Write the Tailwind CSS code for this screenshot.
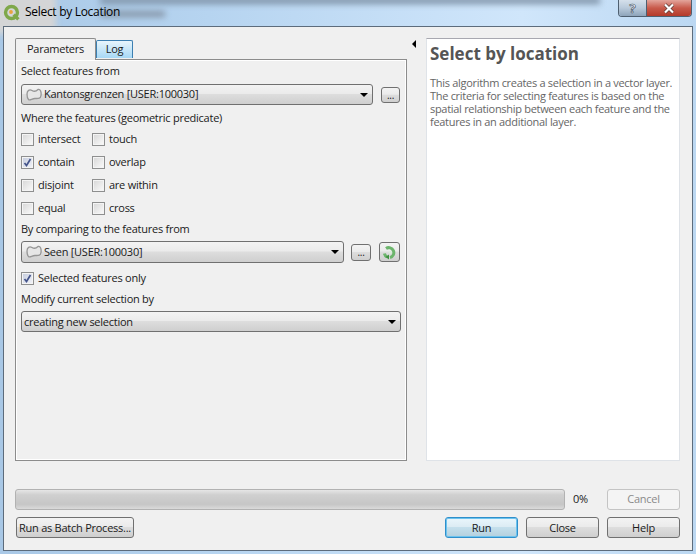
<!DOCTYPE html>
<html lang="en">
<head>
<meta charset="utf-8">
<title>Select by Location</title>
<script src="https://cdn.jsdelivr.net/npm/@tailwindcss/browser@4"></script>
</head>
<body class="m-0 overflow-hidden">
<div class="relative w-[696px] h-[554px] overflow-hidden flex flex-col bg-[linear-gradient(90deg,#a9c8e6,#b6d4f0_30%,#d0e6fb_75%,#bcd8f2)] font-['Open_Sans','Liberation_Sans',sans-serif] text-[11px] tracking-[-0.25px] text-[#1a1a1a]">
  <!-- blurred desktop behind the glass title bar -->
  <div class="absolute left-[-10px] top-[-6px] w-[66px] h-[40px] bg-[#d4d5d6] blur-[3px]"></div>
  <div class="absolute left-[100px] top-[-3px] w-[500px] h-[7px] bg-[#7f93a8] blur-[3px]"></div>
  <div class="absolute left-[100px] top-[11px] w-[65px] h-[6px] bg-[#8494a6] blur-[3px]"></div>

  <div class="relative h-[26px] shrink-0 flex items-start">
    <svg class="ml-[3px] mt-[4px]" width="17" height="17" viewBox="0 0 16 16"><circle cx="8" cy="8" r="5.6" fill="none" stroke="#7fa84a" stroke-width="3.2"/><path d="M10 10l4.5 4.5" stroke="#7fa84a" stroke-width="3.2"/><circle cx="7.5" cy="7.5" r="1.8" fill="#e8a33d"/></svg>
    <span class="ml-[5px] mt-[4px] text-[12px] leading-[16px] tracking-[-0.3px] text-black">Select by Location</span>
    <div class="ml-auto mr-[4px] flex h-[17px] w-[74px] rounded-b-[4px] border border-t-0 border-[#4e5f70] overflow-hidden">
      <div class="w-[28px] border-r border-[#4e5f70] bg-[linear-gradient(#d5e0eb,#b8c9da_50%,#8ea4ba)] flex items-center justify-center text-[13px] font-bold leading-none text-[#eef2f6] [-webkit-text-stroke:0.6px_#3a4856]">?</div>
      <div class="flex-1 bg-[linear-gradient(#e3a59c,#c85a4b_50%,#b43a2a)] flex items-center justify-center">
        <svg width="14" height="11" viewBox="0 0 14 11"><path d="M3 1.5l8 8M11 1.5l-8 8" stroke="#5a3a36" stroke-width="3.6"/><path d="M3 1.5l8 8M11 1.5l-8 8" stroke="#fff" stroke-width="2.2"/></svg>
      </div>
    </div>
  </div>

  <div class="relative mx-[3px] w-[690px] h-[525px] border border-[#5d6c7c] bg-[#f0f0f0] pl-[11px] pt-[11px] flex flex-col">
    <div class="flex h-[423px]">
      <!-- left: tabs -->
      <div class="w-[392px] flex flex-col">
        <div class="flex items-end h-[21px] relative z-10">
          <div class="w-[81px] h-[22px] -mb-px border border-b-0 border-[#8c8c8c] bg-[#f0f0f0] rounded-t-[2px] flex items-center justify-center">Parameters</div>
          <div class="w-[37px] h-[18px] mb-px border border-b-0 border-[#3c7fb1] bg-[linear-gradient(#e8f5fc,#a7d8f5)] rounded-t-[2px] flex items-center justify-center">Log</div>
        </div>
        <div class="flex-1 border border-[#8c8c8c] shadow-[inset_0_0_0_1px_#fff] pl-[5px] pr-[5px] pt-[3px] flex flex-col">
          <div class="h-[16px] leading-[16px]">Select features from</div>
          <div class="mt-[5px] flex items-center">
            <div class="w-[352px] h-[21px] border border-[#707070] rounded-[3px] bg-[linear-gradient(#f3f3f3,#ebebeb_45%,#dddddd_50%,#cfcfcf)] flex items-center pl-[4px]">
              <svg width="16" height="14" viewBox="0 0 16 14"><path d="M1 6C1 2.5 3.5 1 6 2.5S10 3.5 12 1.5C14.5 1 15.5 4 15 7.5S12 10.5 9 10.5 4 13 2.5 11.5 1 8 1 6Z" fill="#e6e6e6" stroke="#969696" stroke-width="1.3"/></svg>
              <span class="ml-[2px]">Kantonsgrenzen [USER:100030]</span>
              <svg class="ml-auto mr-[4px]" width="8" height="4" viewBox="0 0 8 4"><path d="M0 0h8L4 4Z" fill="#000"/></svg>
            </div>
            <div class="ml-[8px] w-[19px] h-[16px] border border-[#707070] rounded-[3px] bg-[linear-gradient(#f3f3f3,#ebebeb_45%,#dddddd_50%,#cfcfcf)] flex items-center justify-center text-[10px] leading-none">...</div>
          </div>
          <div class="mt-[5px] h-[16px] leading-[16px]">Where the features (geometric predicate)</div>
          <div class="mt-[2px] grid grid-cols-[71px_1fr] auto-rows-[23px] items-center">
            <label class="flex items-center gap-[4px]"><span class="w-[13px] h-[13px] border border-[#8e8f8f] bg-[linear-gradient(135deg,#d6d6d6,#fbfbfb)] shadow-[inset_0_0_0_1px_#f4f4f4]"></span>intersect</label>
            <label class="flex items-center gap-[4px]"><span class="w-[13px] h-[13px] border border-[#8e8f8f] bg-[linear-gradient(135deg,#d6d6d6,#fbfbfb)] shadow-[inset_0_0_0_1px_#f4f4f4]"></span>touch</label>
            <label class="flex items-center gap-[4px]"><span class="w-[13px] h-[13px] border border-[#8e8f8f] bg-[linear-gradient(135deg,#c4cbdd,#f4f5f9)] shadow-[inset_0_0_0_1px_#f4f4f4] flex items-center justify-center"><svg width="9" height="9" viewBox="0 0 9 9"><path d="M1.5 5l2 2.5L7.5 1" fill="none" stroke="#44548a" stroke-width="1.7"/></svg></span>contain</label>
            <label class="flex items-center gap-[4px]"><span class="w-[13px] h-[13px] border border-[#8e8f8f] bg-[linear-gradient(135deg,#d6d6d6,#fbfbfb)] shadow-[inset_0_0_0_1px_#f4f4f4]"></span>overlap</label>
            <label class="flex items-center gap-[4px]"><span class="w-[13px] h-[13px] border border-[#8e8f8f] bg-[linear-gradient(135deg,#d6d6d6,#fbfbfb)] shadow-[inset_0_0_0_1px_#f4f4f4]"></span>disjoint</label>
            <label class="flex items-center gap-[4px]"><span class="w-[13px] h-[13px] border border-[#8e8f8f] bg-[linear-gradient(135deg,#d6d6d6,#fbfbfb)] shadow-[inset_0_0_0_1px_#f4f4f4]"></span>are within</label>
            <label class="flex items-center gap-[4px]"><span class="w-[13px] h-[13px] border border-[#8e8f8f] bg-[linear-gradient(135deg,#d6d6d6,#fbfbfb)] shadow-[inset_0_0_0_1px_#f4f4f4]"></span>equal</label>
            <label class="flex items-center gap-[4px]"><span class="w-[13px] h-[13px] border border-[#8e8f8f] bg-[linear-gradient(135deg,#d6d6d6,#fbfbfb)] shadow-[inset_0_0_0_1px_#f4f4f4]"></span>cross</label>
          </div>
          <div class="mt-px h-[16px] leading-[16px]">By comparing to the features from</div>
          <div class="mt-[4px] flex items-center">
            <div class="w-[323px] h-[22px] border border-[#707070] rounded-[3px] bg-[linear-gradient(#f3f3f3,#ebebeb_45%,#dddddd_50%,#cfcfcf)] flex items-center pl-[4px]">
              <svg width="16" height="14" viewBox="0 0 16 14"><path d="M1 6C1 2.5 3.5 1 6 2.5S10 3.5 12 1.5C14.5 1 15.5 4 15 7.5S12 10.5 9 10.5 4 13 2.5 11.5 1 8 1 6Z" fill="#e6e6e6" stroke="#969696" stroke-width="1.3"/></svg>
              <span class="ml-[2px]">Seen [USER:100030]</span>
              <svg class="ml-auto mr-[4px]" width="8" height="4" viewBox="0 0 8 4"><path d="M0 0h8L4 4Z" fill="#000"/></svg>
            </div>
            <div class="ml-[7px] w-[20px] h-[17px] border border-[#707070] rounded-[3px] bg-[linear-gradient(#f3f3f3,#ebebeb_45%,#dddddd_50%,#cfcfcf)] flex items-center justify-center text-[10px] leading-none">...</div>
            <div class="ml-[8px] w-[21px] h-[20px] border border-[#707070] rounded-[3px] bg-[linear-gradient(#f3f3f3,#ebebeb_45%,#dddddd_50%,#cfcfcf)] flex items-center justify-center">
              <svg width="14" height="15" viewBox="0 0 14 15"><path d="M3 3.5A5 5 0 1 1 7 12.5" fill="none" stroke="#6cb56c" stroke-width="3"/><path d="M1.5 8.5A5 5 0 0 0 4 12" fill="none" stroke="#6cb56c" stroke-width="3"/><path d="M6 9.5v5l-3.5-2.5Z" fill="#3f9140"/><circle cx="7.5" cy="7.5" r="1.3" fill="#d9efd9"/></svg>
            </div>
          </div>
          <label class="mt-[7px] h-[16px] leading-[16px] flex items-center gap-[4px]"><span class="w-[13px] h-[13px] border border-[#8e8f8f] bg-[linear-gradient(135deg,#c4cbdd,#f4f5f9)] shadow-[inset_0_0_0_1px_#f4f4f4] flex items-center justify-center"><svg width="9" height="9" viewBox="0 0 9 9"><path d="M1.5 5l2 2.5L7.5 1" fill="none" stroke="#44548a" stroke-width="1.7"/></svg></span>Selected features only</label>
          <div class="mt-[5px] h-[16px] leading-[16px]">Modify current selection by</div>
          <div class="mt-[4px] w-[380px] h-[21px] border border-[#707070] rounded-[3px] bg-[linear-gradient(#f3f3f3,#ebebeb_45%,#dddddd_50%,#cfcfcf)] flex items-center pl-[2px] pt-px">
            <span>creating new selection</span>
            <svg class="ml-auto mr-[4px]" width="8" height="4" viewBox="0 0 8 4"><path d="M0 0h8L4 4Z" fill="#000"/></svg>
          </div>
        </div>
      </div>
      <!-- splitter -->
      <div class="w-[19px] pt-[2px] pl-[5px]">
        <svg width="4" height="8" viewBox="0 0 4 8"><path d="M4 0v8L0 4Z" fill="#000"/></svg>
      </div>
      <!-- help text -->
      <div class="w-[254px] bg-white border border-[#dfe3e8] border-t-[#a8a8b0] px-[3px] pt-[4px] text-[#666]">
        <h1 class="text-[17px] leading-[22px] font-bold tracking-normal text-[#555]">Select by location</h1>
        <p class="mt-[11px] text-[11px] leading-[13px] tracking-[-0.3px]">This algorithm creates a selection in a vector layer. The criteria for selecting features is based on the spatial relationship between each feature and the features in an additional layer.</p>
      </div>
    </div>

    <div class="mt-[27px] flex items-center h-[22px]">
      <div class="w-[550px] h-[21px] border border-[#b2b2b2] rounded-[3px] bg-[linear-gradient(#e6e6e6,#d0d0d0_25%,#c6c6c6_75%,#dadada)]"></div>
      <span class="ml-[8px]">0%</span>
      <div class="ml-auto w-[73px] h-[21px] border border-[#c4c4c4] rounded-[3px] bg-[#f4f4f4] flex items-center justify-center text-[#8a8a8a]">Cancel</div>
      <div class="w-[12px]"></div>
    </div>
    <div class="mt-[7px] flex items-center h-[21px] pl-px pr-[12px]">
      <div class="w-[118px] h-[21px] pt-px border border-[#707070] rounded-[3px] bg-[linear-gradient(#f3f3f3,#ebebeb_45%,#dddddd_50%,#cfcfcf)] flex items-center justify-center whitespace-nowrap">Run as Batch Process...</div>
      <div class="ml-auto w-[73px] h-[21px] pt-px border border-[#2f8fcb] rounded-[3px] shadow-[inset_0_0_0_1px_#6cc3ee] bg-[linear-gradient(#eaf6fc,#dcecf4_45%,#c4dfec_50%,#b4d0de)] flex items-center justify-center">Run</div>
      <div class="ml-[8px] w-[73px] h-[21px] pt-px border border-[#707070] rounded-[3px] bg-[linear-gradient(#f3f3f3,#ebebeb_45%,#dddddd_50%,#cfcfcf)] flex items-center justify-center">Close</div>
      <div class="ml-[8px] w-[73px] h-[21px] pt-px border border-[#707070] rounded-[3px] bg-[linear-gradient(#f3f3f3,#ebebeb_45%,#dddddd_50%,#cfcfcf)] flex items-center justify-center">Help</div>
    </div>
  </div>
</div>
</body>
</html>
